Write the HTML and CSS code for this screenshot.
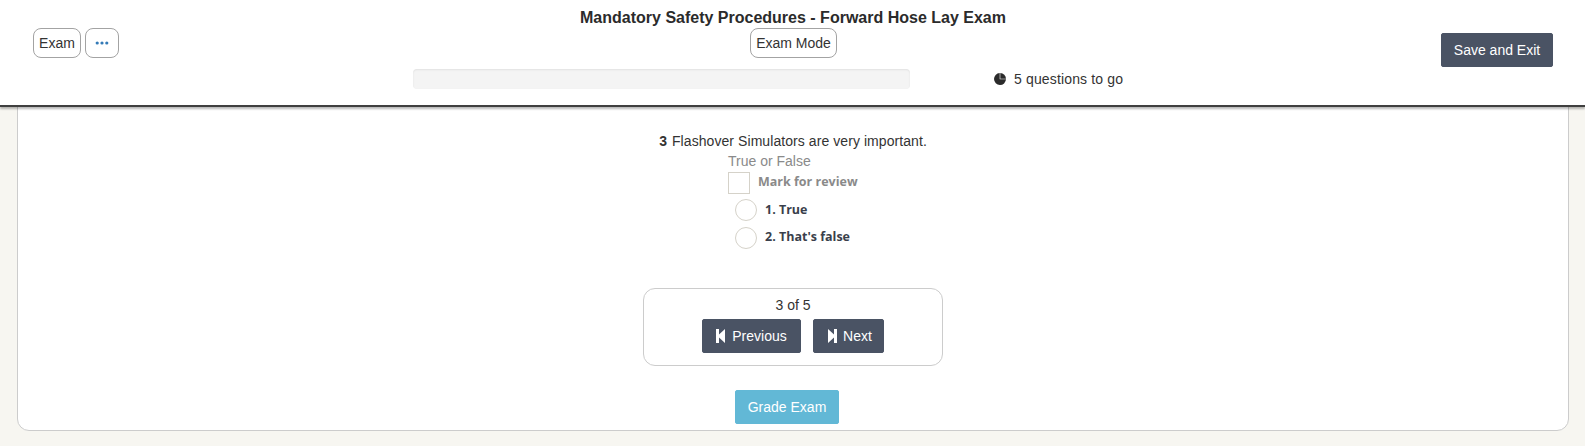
FILE: index.html
```html
<!DOCTYPE html>
<html lang="en">
<head>
<meta charset="utf-8">
<title>Mandatory Safety Procedures - Forward Hose Lay Exam</title>
<link rel="stylesheet" href="styles.css">
</head>
<body>
<header class="topbar">
  <div class="top-left">
    <button class="pill pill-exam" type="button">Exam</button>
    <button class="pill pill-more" type="button" aria-label="More">
      <svg class="dots" viewBox="0 0 14 4" width="14" height="4"><circle cx="2.2" cy="2" r="1.6"/><circle cx="7" cy="2" r="1.6"/><circle cx="11.8" cy="2" r="1.6"/></svg>
    </button>
  </div>
  <div class="top-center">
    <h1 class="title">Mandatory Safety Procedures - Forward Hose Lay Exam</h1>
    <button class="pill pill-mode" type="button">Exam Mode</button>
    <div class="progress-row">
      <div class="progress"></div>
      <div class="togo">
        <svg class="pie" viewBox="0 0 12 12" width="12" height="12"><path d="M5.7 0V6.3H12A6 6 0 1 1 5.7 0Z"/><path d="M6.3 0A6 6 0 0 1 12 5.7H6.3Z"/></svg>
        <span>5 questions to go</span>
      </div>
    </div>
  </div>
  <div class="top-right">
    <button class="btn btn-save" type="button">Save and Exit</button>
  </div>
</header>
<main class="card">
  <div class="question"><b class="qnum">3</b>Flashover Simulators are very important.</div>
  <div class="answers">
    <div class="qtype">True or False</div>
    <label class="mark"><span class="box"></span><span class="opt-text">Mark for review</span></label>
    <label class="option option-first"><span class="radio"></span><span class="opt-text">1. True</span></label>
    <label class="option"><span class="radio"></span><span class="opt-text">2. That's false</span></label>
  </div>
  <nav class="pager">
    <div class="count">3 of 5</div>
    <div class="pager-btns">
      <button class="btn btn-prev" type="button">
        <svg class="step" viewBox="0 0 9 14" width="9" height="14"><path d="M0 0H3V5.4L9 0V14L3 8.6V14H0Z"/></svg><span>Previous</span>
      </button>
      <button class="btn btn-next" type="button">
        <svg class="step step-next" viewBox="0 0 9 14" width="9" height="14"><path d="M0 0L6 5.4V0H9V14H6V8.6L0 14Z"/></svg><span>Next</span>
      </button>
    </div>
  </nav>
  <button class="btn btn-grade" type="button">Grade Exam</button>
</main>
</body>
</html>
```
FILE: styles.css
```css
* { box-sizing: border-box; }
html, body { margin: 0; padding: 0; }
body {
  width: 1585px;
  height: 446px;
  overflow: hidden;
  background: #f7f6f1;
  color: #333;
  font-family: "Liberation Sans", Arial, sans-serif;
  font-size: 14px;
  line-height: 20px;
}
button { font-family: inherit; font-size: 14px; line-height: 20px; cursor: pointer; }

.topbar {
  position: relative;
  z-index: 2;
  display: flex;
  height: 107px;
  background: #fff;
  border-bottom: 2px solid #3f3f3f;
  box-shadow: 0 2px 2px rgba(0, 0, 0, 0.28);
}
.top-left {
  width: 413px;
  padding: 28px 0 0 33px;
  display: flex;
  align-items: flex-start;
  gap: 4px;
}
.top-center {
  width: 760px;
  padding-top: 8px;
  display: flex;
  flex-direction: column;
  align-items: flex-start;
}
.title {
  margin: 0;
  width: 760px;
  text-align: center;
  font-size: 16px;
  line-height: 20px;
  font-weight: 700;
  color: #2b2b2b;
}
.pill {
  height: 30px;
  padding: 0;
  background: #fff;
  border: 1px solid #a3a3a3;
  border-radius: 8px;
  color: #333;
}
.pill-exam { width: 48px; }
.pill-mode { width: 87px; margin-left: 337px; }
.pill-more { width: 34px; display: flex; align-items: center; justify-content: center; }
.dots { fill: #337ab7; display: block; }
.progress-row { display: flex; margin-top: 11px; align-items: flex-start; }
.progress {
  width: 497px;
  height: 20px;
  background: #f4f4f4;
  border-radius: 4px;
  box-shadow: inset 0 1px 2px rgba(0, 0, 0, 0.08);
}
.togo { display: flex; align-items: center; margin-left: 84px; height: 20px; letter-spacing: 0.15px; white-space: nowrap; }
.pie { fill: #2b2b2b; margin-right: 8px; display: block; }

.top-right { flex: 1; display: flex; justify-content: flex-end; padding: 33px 32px 0 0; }
.btn {
  height: 34px;
  padding: 0;
  background: #4a5364;
  border: 1px solid #4a5364;
  border-radius: 2px;
  color: #fff;
}
.btn-save { width: 112px; }

.card {
  position: relative;
  z-index: 1;
  width: 1552px;
  height: 325px;
  margin: -1px 0 0 17px;
  padding-top: 24px;
  background: #fff;
  border: 1px solid #ccc;
  border-radius: 0 0 12px 12px;
  display: flex;
  flex-direction: column;
  align-items: center;
}
.question { height: 20px; line-height: 20px; letter-spacing: 0.07px; }
.qnum { margin-right: 5px; }
.answers { width: 100%; padding-left: 710px; }
.qtype { color: #8a8a8a; height: 21px; line-height: 20px; }
.mark, .option {
  display: flex;
  align-items: center;
  gap: 8px;
  height: 22px;
  font-family: "Open Sans", sans-serif;
  font-size: 12.5px;
  font-weight: 700;
}
.mark { color: #8a8a8a; }
.option { color: #3a3f4b; margin-left: 7px; margin-top: 6px; }
.option-first { margin-top: 5px; }
.opt-text { margin-top: -2px; }
.option-first .opt-text { margin-top: 0; }
.box { width: 22px; height: 22px; border: 1px solid #d5d2c9; background: #fff; }
.radio { width: 22px; height: 22px; border: 1px solid #d5d2c9; border-radius: 50%; background: #fff; }

.pager {
  width: 300px;
  height: 78px;
  margin-top: 39px;
  border: 1px solid #ccc;
  border-radius: 12px;
  display: flex;
  flex-direction: column;
  align-items: center;
  padding-top: 6px;
}
.count { height: 20px; margin-bottom: 4px; }
.pager-btns { display: flex; gap: 12px; }
.btn-prev, .btn-next { display: flex; align-items: center; justify-content: center; }
.btn-prev { width: 99px; }
.btn-next { width: 71px; padding-left: 3px; }
.step { fill: #fff; margin-right: 7px; display: block; }
.step-next { margin-right: 6px; }
.btn-grade {
  width: 104px;
  margin: 24px 12px 0 0;
  background: #62b8d6;
  border-color: #62b8d6;
}
```
